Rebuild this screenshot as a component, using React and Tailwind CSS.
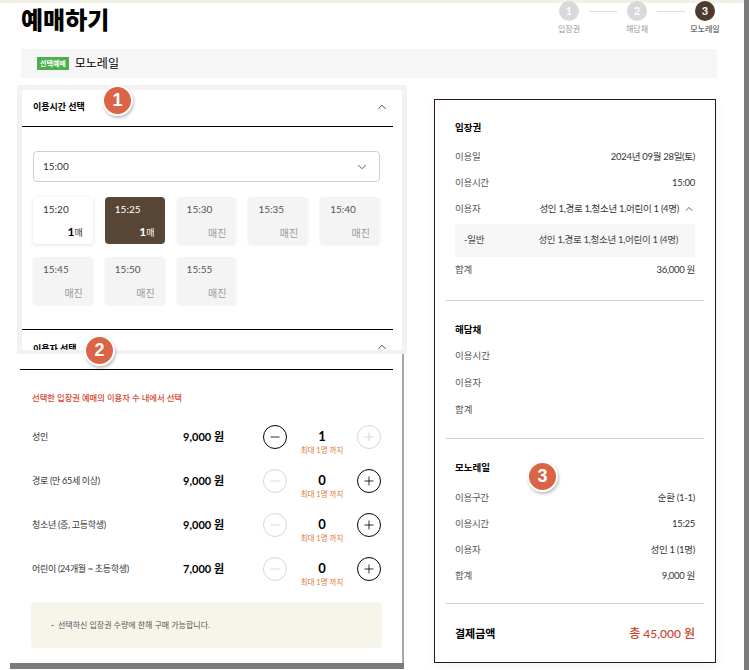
import { ChevronUp, ChevronDown, Minus, Plus } from 'lucide-react'

const slots = [
  { time: '15:20', state: 'open' },
  { time: '15:25', state: 'picked' },
  { time: '15:30', state: 'sold' },
  { time: '15:35', state: 'sold' },
  { time: '15:40', state: 'sold' },
  { time: '15:45', state: 'sold' },
  { time: '15:50', state: 'sold' },
  { time: '15:55', state: 'sold' },
]

const people = [
  { label: '성인', price: '9,000', count: 1, minus: true, plus: false },
  { label: '경로 (만 65세 이상)', price: '9,000', count: 0, minus: false, plus: true },
  { label: '청소년 (중, 고등학생)', price: '9,000', count: 0, minus: false, plus: true },
  { label: '어린이 (24개월 ~ 초등학생)', price: '7,000', count: 0, minus: false, plus: true },
]

const steps = [
  { n: 1, label: '입장권' },
  { n: 2, label: '해담채' },
  { n: 3, label: '모노레일', active: true },
]

function Badge({ n, className }) {
  return (
    <div className={`absolute w-[31px] h-[31px] rounded-full bg-[#dc6446] border-2 border-white shadow-[1px_2px_3px_rgba(0,0,0,0.25)] flex items-center justify-center text-white text-[18px] font-bold font-['Liberation_Sans',sans-serif] ${className}`}>
      {n}
    </div>
  )
}

function Slot({ time, state }) {
  if (state === 'picked') {
    return (
      <div className="h-[47px] rounded-[4px] bg-[#574636] px-[10px] pt-[5px] pb-[4px] flex flex-col justify-between text-white">
        <span className="text-[10px] leading-[14px]">{time}</span>
        <span className="self-end text-[9px] leading-[14px]"><b className="text-[12px]">1</b>매</span>
      </div>
    )
  }
  if (state === 'open') {
    return (
      <div className="h-[47px] rounded-[4px] bg-white shadow-[0_1px_4px_rgba(0,0,0,0.12)] px-[10px] pt-[5px] pb-[4px] flex flex-col justify-between text-[#333]">
        <span className="text-[10px] leading-[14px]">{time}</span>
        <span className="self-end text-[9px] leading-[14px]"><b className="text-[12px] text-black">1</b>매</span>
      </div>
    )
  }
  return (
    <div className="h-[47px] rounded-[4px] bg-[#f4f4f4] shadow-[0_1px_3px_rgba(0,0,0,0.08)] px-[10px] pt-[5px] pb-[4px] flex flex-col justify-between">
      <span className="text-[10px] leading-[14px] text-[#555]">{time}</span>
      <span className="self-end text-[10px] leading-[14px] text-[#999]">매진</span>
    </div>
  )
}

function Counter({ on, children }) {
  return (
    <div className={`w-[24px] h-[24px] rounded-full border flex items-center justify-center ${on ? 'border-black text-black' : 'border-[#d6d6d6] text-[#cfcfcf]'}`}>
      {children}
    </div>
  )
}

function Row({ label, value }) {
  return (
    <div className="h-[26px] flex items-center justify-between text-[9.5px] tracking-[-0.3px] text-[#555]">
      <span>{label}</span>
      <span className="text-[#333]">{value}</span>
    </div>
  )
}

function Heading({ children }) {
  return <div className="h-[26px] flex items-center text-[9.5px] font-bold text-black">{children}</div>
}

export default function App() {
  return (
    <div className="relative w-[749px] h-[670px] overflow-hidden bg-white flex font-['Lato','Noto_Sans_CJK_KR',sans-serif]">
      <div className="w-[744px] flex flex-col">
        <div className="h-[3px] bg-[#f3f1e6]" />
        {/* title + steps */}
        <div className="h-[46px] flex justify-between pl-[21px] pr-[19px]">
          <h1 className="mt-[2px] text-[24px] leading-[28px] font-black text-black font-['Noto_Sans_CJK_KR',sans-serif]">예매하기</h1>
          <div className="flex items-start -mt-[2px]">
            {steps.map((s, i) => (
              <div key={s.n} className="flex items-start">
                {i > 0 && <div className="w-[28px] h-px bg-[#dddddd] mt-[10px]" />}
                <div className="w-[40px] flex flex-col items-center">
                  <div className={`w-[20px] h-[20px] rounded-full flex items-center justify-center text-white text-[11px] font-bold ${s.active ? 'bg-[#4e3b2e]' : 'bg-[#d9d9d9]'}`}>{s.n}</div>
                  <span className={`mt-[3px] text-[8px] leading-[10px] whitespace-nowrap ${s.active ? 'text-[#333]' : 'text-[#999]'}`}>{s.label}</span>
                </div>
              </div>
            ))}
          </div>
        </div>
        {/* selected product bar */}
        <div className="ml-[21px] w-[696px] h-[29px] bg-[#f6f6f6] flex items-center pl-[16px] gap-[6px]">
          <span className="bg-[#4caf50] text-white text-[7px] leading-[13px] px-[3px] font-bold">선택예매</span>
          <span className="text-[12px] text-black">모노레일</span>
        </div>

        <div className="flex mt-[7px] ml-[10px]">
          {/* left column */}
          <div className="w-[397px] flex flex-col">
            <div className="ml-[7px] w-[390px] border-[5px] border-[#f2f2f2] bg-white">
              <div className="mr-[9px] h-[37px] border-b border-black flex items-center justify-between pl-[11px] pr-[4px] pb-[3px]">
                <span className="text-[9px] font-bold text-black">이용시간 선택</span>
                <ChevronUp size={14} strokeWidth={1.5} className="text-[#333]" />
              </div>
              <div className="mr-[9px] border-b border-black pt-[24px] pb-[25px] pl-[11px] pr-[13px]">
                <div className="h-[31px] border border-[#cfcfcf] rounded-[4px] flex items-center justify-between pl-[9px] pr-[10px]">
                  <span className="text-[10px] text-[#333]">15:00</span>
                  <ChevronDown size={14} strokeWidth={1.5} className="text-[#444]" />
                </div>
                <div className="mt-[15px] grid grid-cols-5 gap-x-[12px] gap-y-[13px]">
                  {slots.map((s) => <Slot key={s.time} {...s} />)}
                </div>
              </div>
              <div className="mr-[9px] h-[20px] overflow-hidden flex justify-between pl-[11px] pr-[4px] pt-[12px]">
                <span className="text-[9px] leading-[14px] font-bold text-black">이용자 선택</span>
                <ChevronUp size={14} strokeWidth={1.5} className="text-[#333] -mt-[2px]" />
              </div>
            </div>

            <div className="w-[394px] h-[309px] bg-white border-r-2 border-[#a8a8a8] -mt-px">
              <div className="ml-[10px] mr-[9px] h-[16px] border-b border-black" />
              <p className="pl-[22px] mt-[22px] text-[8.3px] leading-[12px] font-medium text-[#d8462e]">선택한 입장권 예매의 이용자 수 내에서 선택</p>
              <div className="mt-[11px]">
                {people.map((p) => (
                  <div key={p.label} className="h-[44px] flex items-start pt-[10px] pl-[22px]">
                    <span className="w-[130px] h-[24px] flex items-center text-[9px] tracking-[-0.3px] text-[#333]">{p.label}</span>
                    <span className="w-[62px] h-[24px] flex items-center justify-end text-[11px] font-bold text-black">{p.price} 원</span>
                    <div className="ml-[39px]">
                      <Counter on={p.minus}><Minus size={14} strokeWidth={1.4} /></Counter>
                    </div>
                    <div className="w-[70px] flex flex-col items-center">
                      <span className="h-[24px] flex items-center text-[13px] font-bold text-black">{p.count}</span>
                      <span className="-mt-[3px] text-[7.5px] leading-[10px] text-[#e07a35]">최대 1명 까지</span>
                    </div>
                    <Counter on={p.plus}><Plus size={14} strokeWidth={1.4} /></Counter>
                  </div>
                ))}
              </div>
              <div className="ml-[21px] mt-[11px] w-[351px] h-[46px] rounded-[4px] bg-[#f7f4ea] flex items-center pl-[20px] text-[8px] text-[#555]">
                <span className="mr-[4px] text-black">-</span>선택하신 입장권 수량에 한해 구매 가능합니다.
              </div>
            </div>
            <div className="w-[394px] h-[6px] bg-[#7b7b7b]" />
          </div>

          {/* summary */}
          <div className="ml-[27px] mt-[14px] w-[282px] h-[564px] border-[1.5px] border-[#2a1a10] bg-white shadow-[0_3px_10px_rgba(0,0,0,0.06)] px-[11px]">
            <div className="border-b border-[#d0d0d0] px-[9px] pt-[15px] pb-[17px]">
              <div className="mb-[3px]"><Heading>입장권</Heading></div>
              <Row label="이용일" value="2024년 09월 28일(토)" />
              <Row label="이용시간" value="15:00" />
              <div className="h-[26px] flex items-center justify-between text-[9.5px] tracking-[-0.3px] text-[#555]">
                <span>이용자</span>
                <span className="flex items-center gap-[4px] text-[#333]">성인 1,경로 1,청소년 1,어린이 1 (4명)<ChevronUp size={12} strokeWidth={1.5} /></span>
              </div>
              <div className="mt-[2px] h-[33px] bg-[#f6f6f6] flex items-center justify-between pl-[9px] pr-[17px] text-[9.5px] tracking-[-0.3px] text-[#444]">
                <span>-일반</span>
                <span>성인 1,경로 1,청소년 1,어린이 1 (4명)</span>
              </div>
              <Row label="합계" value="36,000 원" />
            </div>
            <div className="border-b border-[#d0d0d0] px-[9px] pt-[16px] pb-[14px]">
              <Heading>해담채</Heading>
              <div className="h-[27px] flex items-center text-[9.5px] text-[#555]">이용시간</div>
              <div className="h-[27px] flex items-center text-[9.5px] text-[#555]">이용자</div>
              <div className="h-[27px] flex items-center text-[9.5px] text-[#555]">합계</div>
            </div>
            <div className="border-b border-[#d0d0d0] px-[9px] pt-[16px] pb-[14px]">
              <div className="mb-[4px]"><Heading>모노레일</Heading></div>
              <Row label="이용구간" value="순환 (1-1)" />
              <Row label="이용시간" value="15:25" />
              <Row label="이용자" value="성인 1 (1명)" />
              <Row label="합계" value="9,000 원" />
            </div>
            <div className="px-[9px] pt-[17px] h-[60px]">
              <div className="h-[26px] flex items-center justify-between">
                <span className="text-[11px] font-bold text-black">결제금액</span>
                <span className="text-[12px] font-medium text-[#c8452c]">총 45,000 원</span>
              </div>
            </div>
          </div>
        </div>
      </div>
      <div className="w-[5px] h-full bg-[#7b7b7b]" />

      <Badge n={1} className="left-[102px] top-[85px]" />
      <Badge n={2} className="left-[84px] top-[335px]" />
      <Badge n={3} className="left-[527px] top-[461px]" />
    </div>
  )
}
